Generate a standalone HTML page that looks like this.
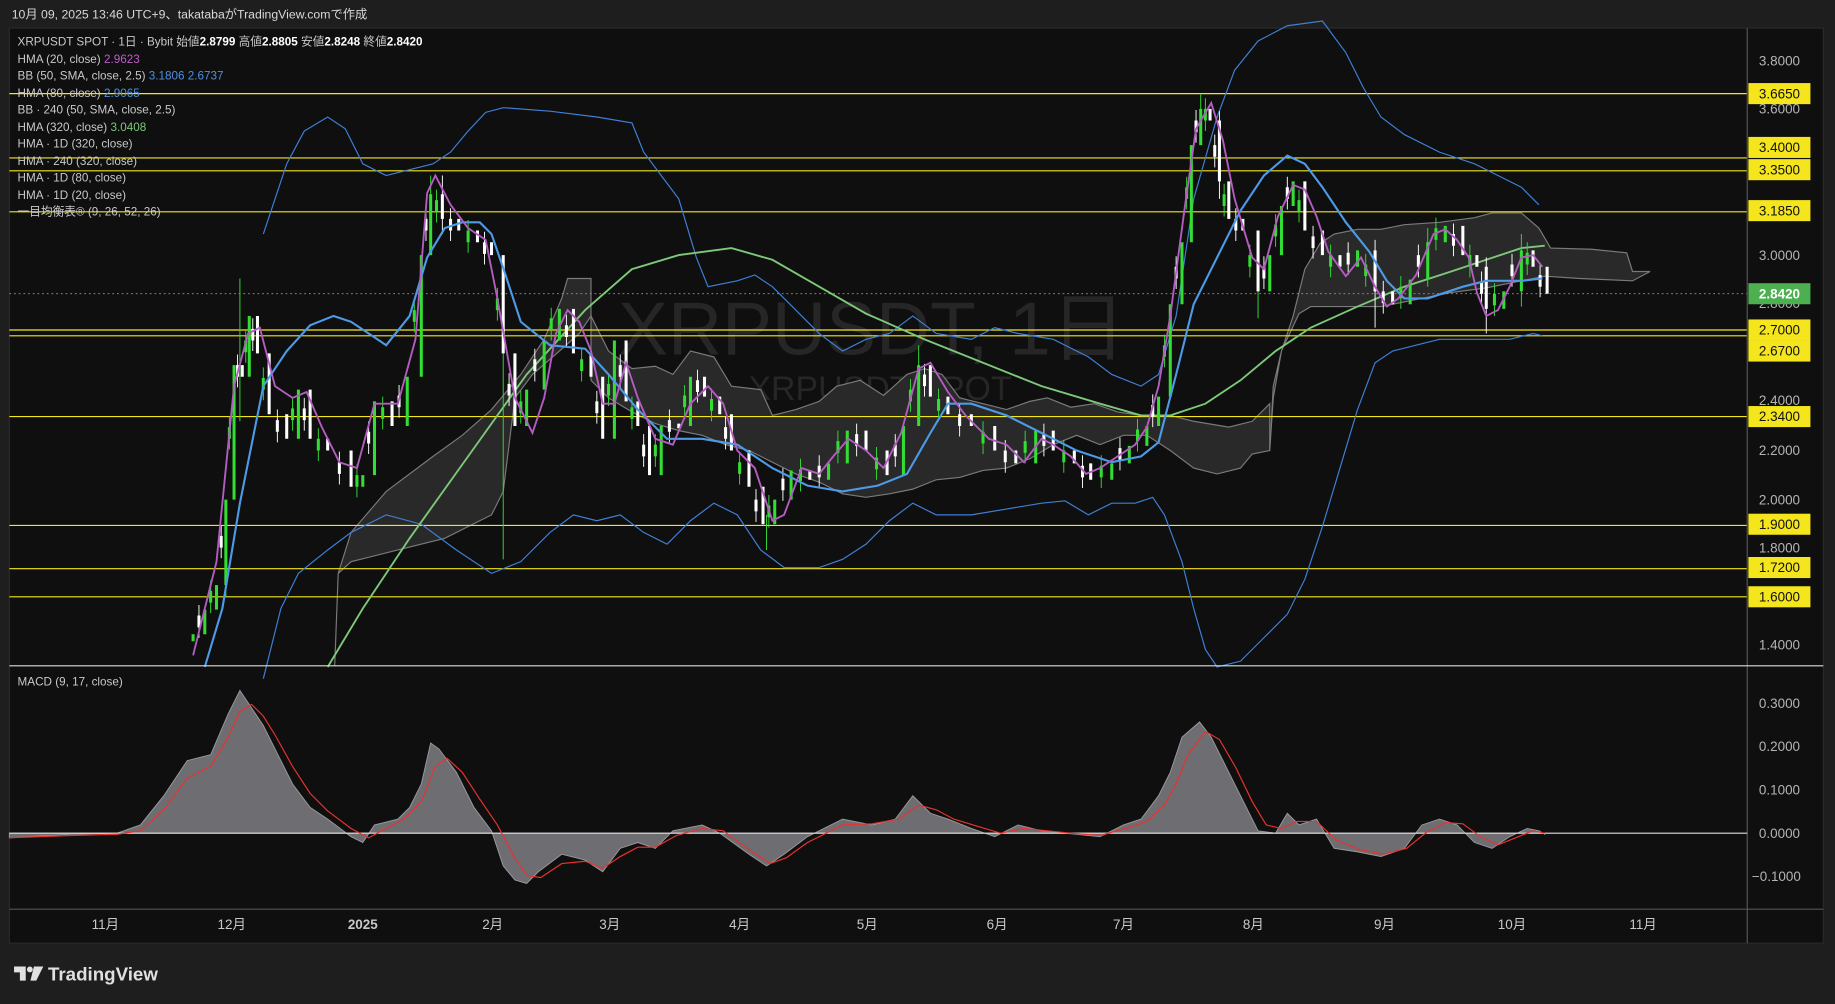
<!DOCTYPE html>
<html><head><meta charset="utf-8"><style>
html,body{margin:0;padding:0;background:#1e1e1e;overflow:hidden}
svg{display:block}
text{font-family:"Liberation Sans","Noto Sans CJK JP",sans-serif}
</style></head><body>
<svg width="1835" height="1004" viewBox="0 0 1568 858" preserveAspectRatio="none" xmlns="http://www.w3.org/2000/svg">
<rect x="0" y="0" width="1568" height="858" fill="#1e1e1e"/>
<rect x="8" y="24" width="1550" height="782" fill="#0f0f0f" stroke="#2a2a2a"/>
<text x="10" y="16" font-size="10.5" fill="#d8d8d8">10月 09, 2025 13:46 UTC+9、takatabaがTradingView.comで作成</text>
<text x="745" y="303" font-size="64" fill="#262626" text-anchor="middle">XRPUSDT, 1日</text>
<text x="752" y="342" font-size="29" fill="#262626" text-anchor="middle">XRPUSDT SPOT</text>
<g fill="#292929" stroke="#7a7a7a" stroke-width="1">
<polygon points="286,569 289,490 300,455 330,420 370,390 395,372 420,350 445,320 465,290 480,255 485,238 505,238 505,270 495,285 478,300 455,320 440,340 435,380 430,420 420,440 380,460 340,470 300,480 289,490"/>
<polygon points="505,270 520,300 540,315 560,313 575,320 590,300 610,305 625,330 650,333 660,355 680,350 700,343 715,330 735,325 755,338 775,320 790,315 805,320 820,340 840,345 860,350 880,343 895,340 915,348 935,345 955,352 975,355 1000,355 1020,360 1050,365 1070,360 1085,345 1085,385 1070,388 1060,400 1040,405 1020,400 1000,385 980,372 960,372 940,380 920,372 900,380 880,392 860,400 840,402 820,408 800,410 780,418 760,422 740,425 720,422 700,412 680,405 660,395 640,385 620,380 600,372 580,368 560,362 540,352 520,340 505,325"/>
<polygon points="1085,385 1088,330 1095,300 1105,270 1115,230 1128,208 1140,200 1160,196 1180,196 1200,192 1230,190 1260,186 1275,182 1300,182 1315,195 1325,212 1360,213 1390,216 1395,232 1410,232 1395,240 1350,238 1320,236 1300,240 1270,246 1240,250 1210,256 1180,262 1150,262 1120,262 1110,268 1095,300 1088,340"/>
</g>
<g stroke="#f5e51c" stroke-width="1">
<line x1="8" x2="1493" y1="80" y2="80"/><line x1="8" x2="1493" y1="135" y2="135"/><line x1="8" x2="1493" y1="146" y2="146"/><line x1="8" x2="1493" y1="181" y2="181"/><line x1="8" x2="1493" y1="282" y2="282"/><line x1="8" x2="1493" y1="287" y2="287"/><line x1="8" x2="1493" y1="356" y2="356"/><line x1="8" x2="1493" y1="449" y2="449"/><line x1="8" x2="1493" y1="486" y2="486"/><line x1="8" x2="1493" y1="510" y2="510"/>
</g>
<line x1="8" x2="1493" y1="251" y2="251" stroke="#999" stroke-dasharray="1.5,2.5" stroke-width="0.8"/>
<g fill="none" stroke="#3f7fd6" stroke-width="1">
<polyline points="225,200 245,140 260,112 280,100 295,110 310,140 330,150 350,145 370,140 385,130 400,112 415,96 430,92 470,95 510,100 540,105 550,130 565,150 580,170 595,220 605,245 630,240 645,235 660,245 680,265 700,285 720,300 740,290 760,285 780,270 800,285 830,290 850,280 870,285 900,290 930,305 950,320 975,330 990,320 1005,270 1020,170 1040,100 1055,60 1075,35 1100,22 1130,18 1150,45 1165,75 1180,100 1200,115 1230,130 1260,140 1280,150 1300,160 1315,175"/>
<polyline points="225,580 240,520 255,490 280,470 300,455 330,440 360,448 390,470 420,490 445,480 470,455 490,440 510,445 530,440 550,455 570,465 590,445 610,430 630,440 650,470 670,485 700,485 720,478 740,465 760,445 780,430 800,440 830,440 860,435 890,430 910,428 930,440 950,430 970,430 985,425 995,440 1010,480 1020,520 1030,555 1040,570 1060,565 1080,545 1100,525 1115,495 1130,450 1145,400 1160,350 1175,310 1190,300 1210,295 1230,290 1260,290 1290,290 1310,285 1318,287"/>
</g>
<polyline fill="none" stroke="#7ec87a" stroke-width="1.6" points="280,570 310,520 350,460 400,390 450,320 500,265 540,230 580,218 625,212 660,222 700,245 740,268 790,290 840,310 890,330 940,345 975,355 1000,355 1030,345 1060,325 1090,300 1120,280 1160,262 1200,245 1240,232 1270,222 1300,212 1320,210"/>
<!-- candles -->
<path fill="none" stroke="#33dd33" stroke-width="0.8" d="M205,238V360M430,280V478M655,440V470M1075,200V272M180,496v28M196,356v28M210,282v28M225,314v28M250,340v28M272,366v28M305,397v28M327,339v28M354,256v28M373,162v28M400,188v28M425,246v28M445,334v28M471,263v28M497,298v28M520,319v28M540,339v28M560,371v28M585,329v28M608,332v28M632,386v28M657,423v28M684,392v28M716,368v28M749,382v28M778,324v28M802,332v28M840,360v28M876,368v28M909,376v28M941,389v28M972,358v28M995,286v28M1014,151v28M1030,84v28M1046,157v28M1068,209v28M1090,183v28M1110,162v28M1137,209v28M1167,217v28M1197,236v28M1227,186v28M1256,209v28M1277,242v28M1305,207v28M193,490V510M368,150V176M785,295V320M1026,80V100M1300,200V262M1220,195V245"/>
<path fill="none" stroke="#ffffff" stroke-width="0.8" d="M170,517v28M189,449v28M203,303v28M216,272v28M237,350v28M260,340v28M290,386v28M315,360v28M341,329v28M364,178v28M385,178v28M414,198v28M435,319v28M457,298v28M484,269v28M510,334v28M530,303v28M550,371v28M572,350v28M596,316v28M620,356v28M646,418v28M669,400v28M700,389v28M732,362v28M765,371v28M790,311v28M820,345v28M859,376v28M892,362v28M925,389v28M957,374v28M985,337v28M1005,219v28M1022,94v28M1038,115v28M1056,178v28M1080,219v28M1100,151v28M1122,193v28M1152,207v28M1182,240v28M1212,209v28M1242,191v28M1266,232v28M1292,217v28M1316,226v28M378,150V200M1042,95V170M1175,205V280M1270,220V285"/>
<path fill="none" stroke="#33dd33" stroke-width="2.6" d="M165,548V542M175,542V521M185,521V500M193,500V427M200,427V312M213,322V270M255,375V333M310,416V406M320,406V343M348,364V322M360,322V218M368,218V166M450,364V333M465,333V291M478,291V264M525,375V291M565,406V364M590,364V322M662,448V427M676,427V402M708,410V396M724,396V368M772,406V364M785,364V312M885,396V368M950,410V396M965,396V381M980,381V364M990,364V339M1000,339V260M1010,260V207M1018,207V124M1026,124V93M1085,249V218M1095,218V176M1105,176V155M1160,228V214M1205,260V239M1220,239V207M1235,207V193M1285,264V249M1300,249V214M180,505v10M196,365v10M210,291v10M225,323v10M250,349v10M272,375v10M305,406v10M327,348v10M354,265v10M373,171v10M400,197v10M425,255v10M445,343v10M471,272v10M497,307v10M520,328v10M540,348v10M560,380v10M585,338v10M608,341v10M632,395v10M657,432v10M684,401v10M716,377v10M749,391v10M778,333v10M802,341v10M840,369v10M876,377v10M909,385v10M941,398v10M972,367v10M995,295v10M1014,160v10M1030,93v10M1046,166v10M1068,218v10M1090,192v10M1110,171v10M1137,218v10M1167,226v10M1197,245v10M1227,195v10M1256,218v10M1277,251v10M1305,216v10"/>
<path fill="none" stroke="#ffffff" stroke-width="2.6" d="M207,312V322M220,270V302M230,302V354M245,354V375M265,333V375M280,375V385M300,385V416M335,343V364M378,166V187M392,187V197M408,197V207M420,207V218M430,218V302M440,302V364M490,264V302M505,302V322M515,322V375M535,291V343M545,343V364M555,364V406M580,362V366M602,322V339M615,339V354M625,354V385M640,385V416M652,416V448M692,402V410M740,368V385M758,385V406M795,312V339M810,339V354M830,354V364M850,364V385M868,385V396M900,368V385M918,385V396M932,396V410M1034,93V103M1042,103V155M1050,155V187M1062,187V197M1075,197V249M1115,155V197M1130,197V218M1145,218V228M1175,214V249M1190,249V260M1250,193V218M1262,218V228M1270,228V264M1310,214V228M1322,228V251M170,526v10M189,458v10M203,312v10M216,281v10M237,359v10M260,349v10M290,395v10M315,369v10M341,338v10M364,187v10M385,187v10M414,207v10M435,328v10M457,307v10M484,278v10M510,343v10M530,312v10M550,380v10M572,359v10M596,325v10M620,365v10M646,427v10M669,409v10M700,398v10M732,371v10M765,380v10M790,320v10M820,354v10M859,385v10M892,371v10M925,398v10M957,383v10M985,346v10M1005,228v10M1022,103v10M1038,124v10M1056,187v10M1080,228v10M1100,160v10M1122,202v10M1152,216v10M1182,249v10M1212,218v10M1242,200v10M1266,241v10M1292,226v10M1316,235v10"/>
<polyline fill="none" stroke="#4d9be8" stroke-width="1.8" points="175,570 190,520 205,430 225,330 245,300 265,278 285,270 300,275 330,295 350,270 365,220 380,195 395,190 410,190 420,200 432,235 445,275 470,295 500,298 520,320 545,350 570,375 600,375 630,380 660,400 690,415 720,420 750,415 775,405 795,370 810,345 830,345 860,355 890,370 920,385 950,395 975,390 990,378 1005,320 1020,260 1040,220 1060,180 1080,150 1100,133 1115,140 1130,160 1150,190 1170,215 1185,240 1200,255 1220,255 1250,245 1270,240 1300,240 1318,238"/>
<polyline fill="none" stroke="#b35dc0" stroke-width="1.6" points="165,560 185,480 200,330 212,285 222,280 235,330 250,340 262,335 275,365 290,395 305,400 320,345 340,345 355,290 365,165 372,150 385,175 400,195 415,205 425,255 440,340 455,370 465,340 475,285 485,265 495,275 505,300 515,345 525,345 535,310 545,340 560,375 575,380 590,345 605,330 618,345 630,385 645,400 660,445 670,440 685,400 700,405 712,390 725,375 740,385 755,400 770,370 785,315 795,310 810,335 825,355 845,375 860,380 875,395 890,375 900,380 915,390 928,405 940,400 955,390 970,380 980,365 990,330 1000,270 1012,180 1022,110 1035,88 1045,120 1055,170 1070,220 1080,230 1092,185 1105,158 1115,162 1125,185 1135,215 1150,236 1163,220 1175,245 1185,262 1195,255 1210,235 1225,200 1235,196 1245,205 1255,220 1262,250 1270,270 1280,265 1290,245 1300,220 1310,218 1318,228"/>
<g font-size="10" fill="#c8c8c8">
<text x="15" y="39">XRPUSDT SPOT · 1日 · Bybit  始値<tspan font-weight="bold" fill="#fff">2.8799</tspan>  高値<tspan font-weight="bold" fill="#fff">2.8805</tspan>  安値<tspan font-weight="bold" fill="#fff">2.8248</tspan>  終値<tspan font-weight="bold" fill="#fff">2.8420</tspan></text>
<text x="15" y="54">HMA (20, close) <tspan fill="#c05ac8">2.9623</tspan></text>
<text x="15" y="68">BB (50, SMA, close, 2.5) <tspan fill="#4d8fe0">3.1806  2.6737</tspan></text>
<text x="15" y="83">HMA (80, close) <tspan fill="#4d8fe0">2.9065</tspan></text>
<text x="15" y="97">BB · 240 (50, SMA, close, 2.5)</text>
<text x="15" y="112">HMA (320, close) <tspan fill="#7ec87a">3.0408</tspan></text>
<text x="15" y="126">HMA · 1D (320, close)</text>
<text x="15" y="141">HMA · 240 (320, close)</text>
<text x="15" y="155">HMA · 1D (80, close)</text>
<text x="15" y="170">HMA · 1D (20, close)</text>
<text x="15" y="184">一目均衡表® (9, 26, 52, 26)</text>
<text x="15" y="586">MACD (9, 17, close)</text>
</g>
<line x1="1493" y1="24" x2="1493" y2="806" stroke="#555" stroke-width="1"/>
<line x1="8" y1="569" x2="1558" y2="569" stroke="#ddd" stroke-width="1"/>
<line x1="8" y1="777" x2="1558" y2="777" stroke="#555" stroke-width="1"/>
<g font-size="11.5" fill="#b4b4b4">
<text x="1503" y="56">3.8000</text><text x="1503" y="97">3.6000</text><text x="1503" y="222">3.0000</text><text x="1503" y="263">2.8000</text><text x="1503" y="346">2.4000</text><text x="1503" y="389">2.2000</text><text x="1503" y="431">2.0000</text><text x="1503" y="472">1.8000</text><text x="1503" y="555">1.4000</text>
<text x="1503" y="605">0.3000</text><text x="1503" y="642">0.2000</text><text x="1503" y="679">0.1000</text><text x="1503" y="716">0.0000</text><text x="1497" y="753">−0.1000</text>
</g>
<g fill="#f5e51c">
<rect x="1494" y="71" width="53" height="18"/><rect x="1494" y="117" width="53" height="18"/><rect x="1494" y="136" width="53" height="18"/><rect x="1494" y="171" width="53" height="18"/><rect x="1494" y="273" width="53" height="18"/><rect x="1494" y="291" width="53" height="18"/><rect x="1494" y="347" width="53" height="18"/><rect x="1494" y="439" width="53" height="18"/><rect x="1494" y="476" width="53" height="18"/><rect x="1494" y="501" width="53" height="18"/>
</g>
<rect x="1494" y="242" width="53" height="18" fill="#4caf50"/>
<g font-size="11.5" fill="#111">
<text x="1503" y="84">3.6650</text><text x="1503" y="130">3.4000</text><text x="1503" y="149">3.3500</text><text x="1503" y="184">3.1850</text><text x="1503" y="286">2.7000</text><text x="1503" y="304">2.6700</text><text x="1503" y="360">2.3400</text><text x="1503" y="452">1.9000</text><text x="1503" y="489">1.7200</text><text x="1503" y="514">1.6000</text>
</g>
<text x="1503" y="255" font-size="11.5" fill="#fff" font-weight="bold">2.8420</text>
<polygon fill="#6e6e72" stroke="#9a9a9e" stroke-width="0.8" points="8,712 8,716 60,713 100,712 120,705 140,680 160,650 180,645 195,610 205,590 215,605 225,620 235,640 250,670 265,690 280,700 300,715 310,720 320,705 340,700 350,690 360,670 368,635 375,640 390,660 405,690 420,710 430,740 440,752 450,755 460,745 480,730 500,735 515,745 530,725 545,720 560,725 575,710 600,705 615,712 640,730 655,740 670,730 690,715 720,700 745,705 765,700 780,680 795,695 810,700 830,708 850,715 870,705 890,710 910,712 940,715 960,705 975,700 990,680 1000,660 1010,630 1025,617 1035,630 1050,660 1065,690 1075,710 1090,712 1100,695 1110,705 1125,700 1140,725 1160,728 1180,732 1200,725 1215,705 1230,700 1245,705 1260,720 1275,725 1290,715 1305,708 1315,710 1320,713 1320,712"/>
<line x1="8" x2="1493" y1="712" y2="712" stroke="#e0e0e0" stroke-width="1"/>
<polyline fill="none" stroke="#e8322e" stroke-width="1" points="8,716 60,714 100,713 120,710 140,692 160,665 180,655 195,630 205,608 215,602 225,612 235,628 250,655 265,678 280,693 300,708 315,716 330,708 345,700 360,685 372,655 382,648 395,660 410,683 425,705 438,730 450,748 462,750 480,738 500,736 515,742 530,732 545,724 560,724 578,714 600,708 618,710 640,726 658,738 672,733 690,720 720,705 745,704 768,700 785,688 800,692 815,700 835,706 855,712 875,708 895,710 915,712 940,714 962,708 980,702 995,688 1005,670 1015,645 1030,625 1042,632 1056,656 1070,685 1082,705 1095,708 1108,702 1125,702 1142,718 1162,726 1182,730 1202,725 1218,712 1235,703 1250,704 1265,715 1280,722 1295,716 1310,710 1320,712"/>
<g font-size="11.5" fill="#c8c8c8" text-anchor="middle">
<text x="90" y="794">11月</text><text x="198" y="794">12月</text><text x="310" y="794" font-weight="bold">2025</text><text x="421" y="794">2月</text><text x="521" y="794">3月</text><text x="632" y="794">4月</text><text x="741" y="794">5月</text><text x="852" y="794">6月</text><text x="960" y="794">7月</text><text x="1071" y="794">8月</text><text x="1183" y="794">9月</text><text x="1292" y="794">10月</text><text x="1404" y="794">11月</text>
</g>
<g fill="#e0e0e0">
<path d="M12,826 h10 v12 h-5 v-7 h-5 z"/>
<circle cx="25.5" cy="828.5" r="2.5"/>
<path d="M29,826 h8 l-6,12 h-5 z"/>
</g>
<text x="41" y="838" font-size="16" font-weight="bold" fill="#e0e0e0">TradingView</text>
</svg>
</body></html>
